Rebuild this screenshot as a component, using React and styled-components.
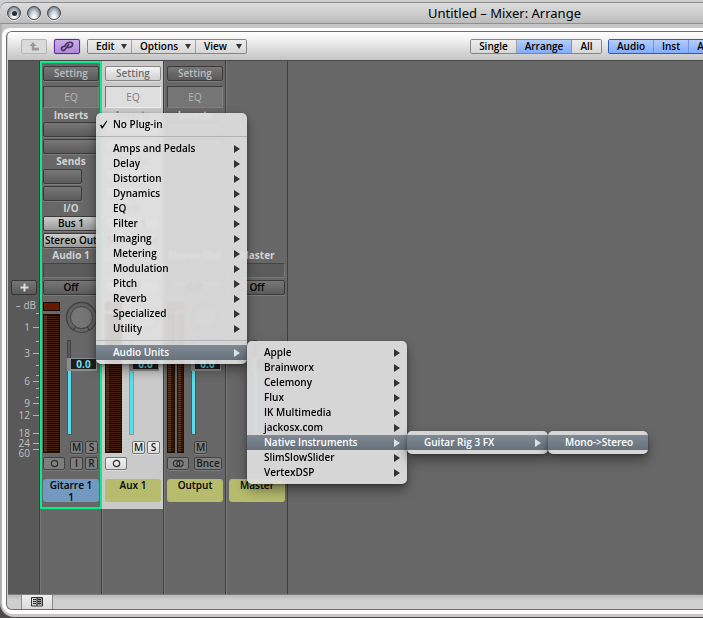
import React from "react";
import styled, { createGlobalStyle, css } from "styled-components";

const GlobalStyle = createGlobalStyle`
  * { box-sizing: border-box; }
  body {
    margin: 0;
    overflow: hidden;
    font-family: "Open Sans", "Noto Sans", sans-serif;
    font-size: 10px;
    line-height: 15px;
    color: #000;
  }
  button {
    margin: 0;
    padding: 0;
    font: inherit;
    color: inherit;
    white-space: nowrap;
  }
`;

/* ---------- window ---------- */

const Desktop = styled.div`
  min-height: 100vh;
  display: flex;
  flex-direction: column;
  padding: 2px 0 1px;
  background: linear-gradient(#cfcfcf 0 8px, #4c4a4a 40px);
`;

const Window = styled.div`
  flex: 1;
  display: flex;
  flex-direction: column;
  padding-bottom: 3px;
  border-top: 1px solid #8c8c8c;
  border-radius: 7px 0 0 14px;
  background: linear-gradient(to right, #a8a8a8, #c6c6c6 3px);
`;

const TitleBar = styled.header`
  display: flex;
  align-items: center;
  height: 21px;
  flex: none;
  padding-left: 7px;
  border-bottom: 1px solid #8e8e8e;
  border-radius: 7px 0 0 0;
  background: linear-gradient(#dedede, #bcbcbc);
`;

const Lights = styled.div`
  display: flex;
  gap: 6px;
  width: 421px;
  flex: none;
`;

const Light = styled.button`
  display: grid;
  place-items: center;
  width: 14px;
  height: 14px;
  border: 1px solid #444b52;
  border-radius: 50%;
  background: radial-gradient(ellipse at 50% 90%, #fff 10%, #c3ced6 45%, #7d8790 75%, #59626b);
  box-shadow: 0 1px 0 #eee;
`;

const LightDot = styled.span`
  width: 5px;
  height: 5px;
  border-radius: 50%;
  background: #2b2f33;
`;

const Title = styled.h1`
  margin: 0;
  font-family: "Noto Sans", sans-serif;
  font-size: 13px;
  font-weight: 400;
  line-height: 20px;
  white-space: nowrap;
`;

const Frame = styled.div`
  flex: 1;
  display: flex;
  flex-direction: column;
  margin: 4px 0 0 2px;
  padding: 3px 0 4px 4px;
  border-radius: 8px 0 0 11px;
  background: #fcfcfc;
`;

const Panel = styled.main`
  flex: 1;
  display: flex;
  flex-direction: column;
  min-width: 0;
  border: 1px solid #6e6e6e;
  border-right: 0;
  border-radius: 6px 0 0 6px;
  padding-left: 1px;
  background: #ccc;
  overflow: hidden;
`;

/* ---------- toolbar ---------- */

const Toolbar = styled.div`
  display: flex;
  align-items: center;
  height: 29px;
  flex: none;
  padding-left: 13px;
  border-bottom: 1px solid #4a4a4a;
  background: linear-gradient(#fff, #f0f0f0 30%, #c4c4c4);
  font-weight: 600;
  white-space: nowrap;
`;

const IconButton = styled.button`
  display: grid;
  place-items: center;
  width: 26px;
  height: 15px;
  flex: none;
  margin-right: 7px;
  border: 1px solid ${(p) => (p.$on ? "#5b2a96" : "#b4b4b4")};
  border-radius: 2px;
  background: ${(p) => (p.$on ? "linear-gradient(#c9aee6, #b28add)" : "#dadada")};
  ${(p) => p.$on && "box-shadow: 0 0 1px #5b2a96;"}
`;

const Group = styled.div`
  display: flex;
  flex: none;
  height: 15px;
  margin-left: ${(p) => p.$before || 0}px;
  border: 1px solid ${(p) => (p.$blue ? "#2a5cc8" : "#858585")};
  border-radius: 2px;
  overflow: hidden;
`;

const Segment = styled.button`
  display: flex;
  align-items: center;
  justify-content: ${(p) => (p.$menu ? "space-between" : "center")};
  width: ${(p) => p.$w}px;
  height: 13px;
  padding: 0 ${(p) => (p.$menu ? "4px 0 8px" : "0")};
  border: 0;
  border-right: 1px solid ${(p) => (p.$on ? "#6f93dc" : "#a2a2a2")};
  background: ${(p) => (p.$on ? "linear-gradient(#b5cdfb, #83acf9)" : "linear-gradient(#ededed, #d6d6d6)")};
  line-height: 13px;
  &:last-child { border-right: 0; }
`;

/* ---------- mixer ---------- */

const Mixer = styled.div`
  position: relative;
  flex: 1;
  display: flex;
  background: #676767;
`;

const Ruler = styled.aside`
  width: 32px;
  flex: none;
  padding: 219px 0 0 3px;
  border-right: 1px solid #404040;
  background: #595959;
`;

const AddButton = styled.button`
  display: grid;
  place-items: center;
  width: 26px;
  height: 15px;
  border: 1px solid #363636;
  border-radius: 2px;
  background: linear-gradient(#777, #585858);
`;

const Scale = styled.div`
  display: flex;
  justify-content: flex-end;
  margin-top: 5px;
  color: #c0c0c0;
`;

const Marks = styled.ol`
  flex: 1;
  margin: 0;
  padding: 0 3px 0 0;
  list-style: none;
  text-align: right;
  white-space: nowrap;
`;

const Mark = styled.li`
  height: 10px;
  margin-top: ${(p) => p.$gap}px;
  line-height: 10px;
  margin-right: ${(p) => (p.$head ? -6 : 0)}px;
`;

const TickMarks = styled.svg`
  width: 6px;
  height: 150px;
  flex: none;
  margin-top: 5px;
`;

const Column = styled.section`
  width: 62px;
  flex: none;
  background: linear-gradient(to right, #787878 1px, #676767 1px 61px, #404040 61px);
`;

const Strip = styled.div`
  display: flex;
  flex-direction: column;
  height: 448px;
  padding: 5px 3px 7px;
  color: ${(p) => (p.$light ? "#777" : "#d2d2d2")};
  ${(p) => p.$light && "background: linear-gradient(to right, #cacaca 61px, #404040 61px);"}
  ${(p) => p.$selected && "box-shadow: inset 0 0 0 2px #00f08c;"}
`;

const plate = css`
  border: 1px solid ${(p) => (p.$light ? "#858585" : "#3a3a3a")};
  border-radius: 2px;
  background: ${(p) => (p.$light ? "linear-gradient(#f4f4f4, #cfcfcf)" : "linear-gradient(#777, #5a5a5a)")};
  box-shadow: 0 1px 0 ${(p) => (p.$light ? "#ddd" : "#7c7c7c")};
`;

const SlotButton = styled.button`
  ${plate}
  width: ${(p) => (p.$short ? "39px" : "100%")};
  height: 15px;
  flex: none;
  margin-bottom: ${(p) => p.$after || 0}px;
  overflow: hidden;
  font-weight: 600;
  line-height: 13px;
  color: ${(p) => (p.$dim ? (p.$light ? "#6e6e6e" : "#bcbcbc") : "#000")};
  ${(p) => p.$bright && "background: linear-gradient(#cdcdcd, #9a9a9a);"}
`;

const EqBox = styled.button`
  height: 22px;
  flex: none;
  border: 1px solid;
  border-color: ${(p) => (p.$light ? "#777 #eee #eee #777" : "#3e3e3e #808080 #808080 #3e3e3e")};
  background: ${(p) => (p.$light ? "#dedede" : "#757575")};
  color: ${(p) => (p.$light ? "#808080" : "#b6b6b6")};
  line-height: 20px;
`;

const Heading = styled.h2`
  height: ${(p) => p.$h || 15}px;
  flex: none;
  margin: 0;
  font-size: 10px;
  line-height: 15px;
  font-weight: 700;
  text-align: center;
  white-space: nowrap;
`;

const Gap = styled.div`
  height: ${(p) => p.$h}px;
  flex: none;
`;

const GroupBox = styled.div`
  height: 15px;
  flex: none;
  margin-bottom: 2px;
  border: 1px solid;
  border-color: ${(p) => (p.$light ? "#888 #ddd #ddd #888" : "#444 #777 #777 #444")};
  background: ${(p) => (p.$light ? "#bebebe" : "#5c5c5c")};
`;

const Lower = styled.div`
  display: flex;
  flex: 1;
`;

const MeterSide = styled.div`
  width: 22px;
  height: 168px;
  display: flex;
  flex-direction: column;
`;

const Led = styled.div`
  width: 17px;
  height: 9px;
  margin-bottom: 3px;
  border: 1px solid #1c0a04;
  background: #631b00;
`;

const Meters = styled.div`
  display: flex;
  gap: 2px;
  width: 17px;
  height: 139px;
  margin-bottom: 4px;
`;

const Meter = styled.div`
  flex: 1;
  border: 1px solid #1d1009;
  background: repeating-linear-gradient(#0c0502 0 1px, #4a220a 1px 2px);
  box-shadow: inset 3px 0 0 rgba(110, 95, 88, 0.35);
`;

const FaderSide = styled.div`
  width: 34px;
  margin-left: ${(p) => (p.$alone ? 22 : 0)}px;
  display: flex;
  flex-direction: column;
`;

const KnobSlot = styled.div`
  height: 39px;
  margin-top: -1px;
`;

const Track = styled.div`
  width: 4px;
  height: 18px;
  margin-left: 2px;
  border: 1px solid ${(p) => (p.$light ? "#888" : "#444")};
  border-bottom: 0;
  background: ${(p) => (p.$light ? "#aaa" : "#585858")};
`;

const Readout = styled.output`
  display: block;
  width: 30px;
  height: 13px;
  margin-left: 2px;
  border: 1px solid #8d8d8d;
  border-width: 1px 1px 2px 4px;
  background: #1d1d1d;
  color: #6fe3f5;
  font-weight: 700;
  line-height: 10px;
  text-align: center;
`;

const Level = styled.div`
  width: 5px;
  height: 64px;
  margin: 0 0 6px 2px;
  border: 1px solid ${(p) => (p.$light ? "#999" : "#555")};
  border-top: 0;
  background: #58dcec;
`;

const KeyRow = styled.div`
  display: flex;
  gap: 2px;
  height: 13px;
  margin: 0 0 3px 5px;
`;

const Key = styled.button`
  ${plate}
  display: grid;
  place-items: center;
  width: ${(p) => p.$w || 13}px;
  height: 13px;
  flex: none;
  border-color: ${(p) => (p.$light ? "#777" : "#414141")};
  background: ${(p) => (p.$light ? "linear-gradient(#f2f2f2, #dadada)" : "#7e7e7e")};
  color: #1c1c1c;
  font-weight: 600;
  line-height: 11px;
`;

const NamePlate = styled.div`
  height: 23px;
  flex: none;
  border-radius: 3px;
  background: ${(p) => p.$color};
  color: #000;
  font-weight: 600;
  line-height: 12px;
  text-align: center;
  white-space: pre-line;
`;

/* ---------- menus ---------- */

const Menu = styled.ul`
  position: absolute;
  z-index: 2;
  left: ${(p) => p.$left};
  top: ${(p) => p.$top}px;
  width: ${(p) => p.$w}px;
  margin: 0;
  padding: 4px 0;
  list-style: none;
  border-radius: 5px;
  color: #000;
  font-weight: 600;
  box-shadow: 0 6px 12px rgba(0, 0, 0, 0.4), 0 1px 3px rgba(0, 0, 0, 0.3);
  &::before {
    content: "";
    position: absolute;
    z-index: -1;
    inset: 0;
    border-radius: 5px;
    background: rgba(224, 224, 224, 0.92);
    backdrop-filter: blur(1px);
  }
`;

const Entry = styled.li`
  position: relative;
`;

const EntryButton = styled.button`
  display: flex;
  align-items: center;
  width: 100%;
  height: 15px;
  padding: 0 7px 0 3px;
  border: 0;
  text-align: left;
  background: ${(p) => (p.$on ? "linear-gradient(#7f8a95, #66717c)" : "none")};
  color: ${(p) => (p.$on ? "#fff" : "#000")};
`;

const CheckSlot = styled.span`
  width: 14px;
  flex: none;
  line-height: 0;
`;

const EntryText = styled.span`
  flex: 1;
`;

const Separator = styled.li`
  height: 9px;
  padding-top: 4px;
  &::after {
    content: "";
    display: block;
    height: 1px;
    background: #b5b5b5;
  }
`;

/* ---------- status bar ---------- */

const StatusBar = styled.footer`
  display: flex;
  height: 15px;
  flex: none;
  padding-left: 13px;
  border-top: 1px solid #7d7d7d;
  background: linear-gradient(#b8b8b8, #cfcfcf 5px);
`;

const ViewTab = styled.button`
  display: grid;
  place-items: center;
  width: 32px;
  height: 14px;
  border: 1px solid #8a8a8a;
  border-width: 0 1px;
  background: linear-gradient(#eee, #dcdcdc);
`;

/* ---------- drawings ---------- */

const Down = () => (
  <svg width="6" height="5" aria-hidden="true">
    <path d="M0 0H6L3 5Z" fill="#333" />
  </svg>
);

const Right = ({ on }) => (
  <svg width="6" height="8" aria-hidden="true">
    <path d="M0 0L6 4L0 8Z" fill={on ? "#dfe3e8" : "#333"} />
  </svg>
);

const Check = () => (
  <svg width="9" height="9" viewBox="0 0 9 9" aria-hidden="true">
    <path d="M1 5.2L2.2 4.4L3.3 6.4L7.6 0.6L8.4 1L3.6 8.6H2.8Z" fill="#000" />
  </svg>
);

const UpLevel = () => (
  <svg width="11" height="9" aria-hidden="true">
    <path d="M4 0L7.5 4H5.2V5.8H10V8.4H2.8V4H0.5Z" fill="#999" />
  </svg>
);

const Link = () => (
  <svg width="14" height="11" viewBox="0 0 14 11" fill="none" stroke="#4b3566" strokeWidth="1.7" strokeLinecap="round" aria-hidden="true">
    <path d="M4.6 5.2L6.6 2.6Q7.8 1.3 9.2 1.3H11Q13 1.6 12.6 3.8Q12.2 5.6 10.2 6.2L7.6 6.6" />
    <path d="M8.6 3.8L4.8 8.8Q3.4 10.2 2 9Q1 7.6 2 6.2L4.6 5.2" />
  </svg>
);

const Plus = () => (
  <svg width="9" height="9" aria-hidden="true">
    <path d="M4.5 0.5V8.5M0.5 4.5H8.5" stroke="#ddd" strokeWidth="2" />
  </svg>
);

const Knob = ({ light }) => {
  const line = light ? "#999" : "#424242";
  return (
    <svg width="33" height="33" aria-hidden="true" fill="none">
      <path
        d="M8.5 29.2A15 15 0 1 1 24.5 29.2L22 25.6Q16.5 29.4 11 25.6Z"
        fill={light ? "#c4c4c4" : "#616161"}
        stroke={line}
        strokeWidth="1.3"
      />
      <path d="M8.5 29.2Q16.5 34 24.5 29.2" stroke={line} />
      <circle cx="16.5" cy="16.5" r="11" fill={light ? "#d6d6d6" : "#757575"} stroke={line} />
    </svg>
  );
};

const TICKS = [
  [8, 3], [22, 6], [36, 3], [48, 6], [60, 3], [70, 3], [76, 6], [83, 3],
  [92, 3], [98, 6], [110, 6], [128, 6], [138, 6], [144, 6],
];

const Ticks = () => (
  <TickMarks aria-hidden="true">
    {TICKS.map(([y, w]) => (
      <path key={y} d={`M${6 - w} ${y + 0.5}H6`} stroke="#b4b4b4" />
    ))}
  </TickMarks>
);

const Mono = () => (
  <svg width="9" height="9" fill="none" aria-hidden="true">
    <circle cx="4.5" cy="4.5" r="3.2" stroke="#333" strokeWidth="1.2" />
  </svg>
);

const StereoRings = () => (
  <svg width="13" height="9" fill="none" aria-hidden="true">
    <circle cx="4.5" cy="4.5" r="3.2" stroke="#333" strokeWidth="1.2" />
    <circle cx="8" cy="4.5" r="3.2" stroke="#333" strokeWidth="1.2" />
  </svg>
);

const ListIcon = () => (
  <svg width="12" height="10" aria-hidden="true">
    <path d="M0.5 0.5H11.5V9H0.5Z" fill="#d5d5d5" stroke="#333" />
    <path d="M6 1H11V9H6Z" fill="#999" />
    <path d="M6 1V9M2 2.5H5M2 4.5H5M2 6.5H5M7 2.5H10M7 4.5H10M7 6.5H10" stroke="#222" />
  </svg>
);

/* ---------- data ---------- */

const MARKS = [["1", 12], ["3", 16], ["6", 18], ["9", 12], ["12", 2], ["18", 8], ["24", 0], ["60", 0]];

const CHANNELS = [
  {
    title: "Audio 1", plate: "Gitarre 1\n1", color: "#7299bf", selected: true,
    io: ["Bus 1", "Stereo Out"], keys: ["M", "S"], extra: ["I", "R"],
  },
  { title: "Aux 1", plate: "Aux 1", color: "#b6bb6e", light: true, io: ["Bus 1", "Stereo Out"], keys: ["M", "S"] },
  { title: "Stereo Out", plate: "Output", color: "#b6bb6e", stereo: true, keys: ["M"], bounce: true },
  { title: "Master", plate: "Master", color: "#b6bb6e", master: true },
];

const PLUGIN_GROUPS = [
  "Amps and Pedals", "Delay", "Distortion", "Dynamics", "EQ", "Filter", "Imaging",
  "Metering", "Modulation", "Pitch", "Reverb", "Specialized", "Utility",
];

const VENDORS = [
  "Apple", "Brainworx", "Celemony", "Flux", "IK Multimedia", "jackosx.com",
  "Native Instruments", "SlimSlowSlider", "VertexDSP",
];

/* ---------- parts ---------- */

function Channel({ c }) {
  const light = c.light;
  return (
    <Column>
      <Strip $light={light} $selected={c.selected}>
        {c.master ? (
          <Gap $h={182} />
        ) : (
          <>
            <SlotButton $light={light} $dim $after={5}>Setting</SlotButton>
            <EqBox $light={light}>EQ</EqBox>
            <Heading $h={14}>Inserts</Heading>
            <SlotButton $light={light} $after={2} aria-label="Insert 1" />
            <SlotButton $light={light} aria-label="Insert 2" />
            {c.stereo ? (
              <Gap $h={94} />
            ) : (
              <>
                <Heading>Sends</Heading>
                <SlotButton $light={light} $short $after={2} aria-label="Send 1" />
                <SlotButton $light={light} $short aria-label="Send 2" />
                <Heading>I/O</Heading>
                <SlotButton $light={light} $bright={!light} $after={2}>{c.io[0]}</SlotButton>
                <SlotButton $light={light} $bright={!light}>{c.io[1]}</SlotButton>
              </>
            )}
          </>
        )}
        <Heading>{c.title}</Heading>
        <GroupBox $light={light} />
        <SlotButton $light={light} $after={7}>Off</SlotButton>
        <Lower>
          {!c.master && (
            <MeterSide>
              <Led />
              <Meters>
                <Meter />
                {c.stereo && <Meter />}
              </Meters>
              <Key $w={22} $light={light} aria-label="Format">
                {c.stereo ? <StereoRings /> : <Mono />}
              </Key>
            </MeterSide>
          )}
          <FaderSide $alone={c.master}>
            <KnobSlot>{!c.master && <Knob light={light} />}</KnobSlot>
            <Track $light={light} />
            <Readout>{c.master ? "" : "0.0"}</Readout>
            <Level $light={light} />
            {c.keys && (
              <KeyRow>
                {c.keys.map((k) => <Key key={k} $light={light}>{k}</Key>)}
              </KeyRow>
            )}
            {c.extra && (
              <KeyRow>
                {c.extra.map((k) => <Key key={k}>{k}</Key>)}
              </KeyRow>
            )}
            {c.bounce && (
              <KeyRow>
                <Key $w={28}>Bnce</Key>
              </KeyRow>
            )}
          </FaderSide>
        </Lower>
        <NamePlate $color={c.color}>{c.plate}</NamePlate>
      </Strip>
    </Column>
  );
}

function MenuEntry({ label, on, leaf, checked, children }) {
  return (
    <Entry>
      <EntryButton $on={on}>
        <CheckSlot>{checked && <Check />}</CheckSlot>
        <EntryText>{label}</EntryText>
        {!leaf && <Right on={on} />}
      </EntryButton>
      {children}
    </Entry>
  );
}

function PluginMenu() {
  return (
    <Menu $left="88px" $top={52} $w={151}>
      <MenuEntry label="No Plug-in" leaf checked />
      <Separator />
      {PLUGIN_GROUPS.map((g) => <MenuEntry key={g} label={g} />)}
      <Separator />
      <MenuEntry label="Audio Units" on>
        <Menu $left="100%" $top={-4} $w={160}>
          {VENDORS.map((v) => (
            <MenuEntry key={v} label={v} on={v === "Native Instruments"}>
              {v === "Native Instruments" && (
                <Menu $left="100%" $top={-4} $w={141}>
                  <MenuEntry label="Guitar Rig 3 FX" on>
                    <Menu $left="100%" $top={-4} $w={100}>
                      <MenuEntry label="Mono->Stereo" on leaf />
                    </Menu>
                  </MenuEntry>
                </Menu>
              )}
            </MenuEntry>
          ))}
        </Menu>
      </MenuEntry>
    </Menu>
  );
}

export default function App() {
  return (
    <>
      <GlobalStyle />
      <Desktop>
        <Window>
          <TitleBar>
            <Lights>
              <Light aria-label="Close"><LightDot /></Light>
              <Light aria-label="Minimize" />
              <Light aria-label="Zoom" />
            </Lights>
            <Title>Untitled – Mixer: Arrange</Title>
          </TitleBar>
          <Frame>
            <Panel>
              <Toolbar>
                <IconButton aria-label="Up one level"><UpLevel /></IconButton>
                <IconButton $on aria-label="Link"><Link /></IconButton>
                <Group>
                  <Segment $menu $w={44}>Edit <Down /></Segment>
                  <Segment $menu $w={64}>Options <Down /></Segment>
                  <Segment $menu $w={50}>View <Down /></Segment>
                </Group>
                <Group $before={223}>
                  <Segment $w={46}>Single</Segment>
                  <Segment $w={55} $on>Arrange</Segment>
                  <Segment $w={29}>All</Segment>
                </Group>
                <Group $before={6} $blue>
                  <Segment $w={45} $on>Audio</Segment>
                  <Segment $w={35} $on>Inst</Segment>
                  <Segment $w={35} $on>Aux</Segment>
                </Group>
              </Toolbar>
              <Mixer>
                <Ruler>
                  <AddButton aria-label="Add channel"><Plus /></AddButton>
                  <Scale>
                    <Marks>
                      <Mark $gap={0} $head>– dB</Mark>
                      {MARKS.map(([m, gap]) => <Mark key={m} $gap={gap}>{m}</Mark>)}
                    </Marks>
                    <Ticks />
                  </Scale>
                </Ruler>
                {CHANNELS.map((c) => <Channel key={c.title} c={c} />)}
                <PluginMenu />
              </Mixer>
              <StatusBar>
                <ViewTab aria-label="List view"><ListIcon /></ViewTab>
              </StatusBar>
            </Panel>
          </Frame>
        </Window>
      </Desktop>
    </>
  );
}
